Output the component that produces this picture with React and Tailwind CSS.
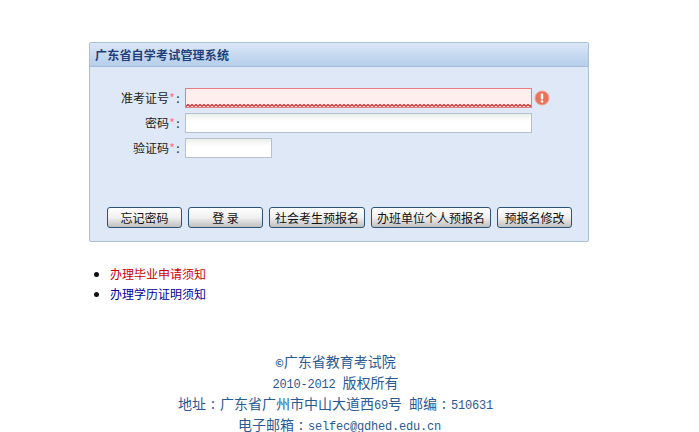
import React from 'react';

const cjk = { fontFamily: '"Noto Sans CJK SC", "Liberation Sans", sans-serif' };

function Field({ label, wide, error }) {
  return (
    <div className="flex items-center h-[20px]">
      <label className="w-[95px] pr-[4px] text-right text-[12px] leading-[20px] text-[#1c1c1c]">
        {label}
        <span className="inline-block w-[6px] text-center text-[#ff6f8a]">*</span>
        <span className="inline-block w-[6px] text-center">:</span>
      </label>
      {error ? (
        <>
          <div className="relative w-[347px] h-[20px] bg-[#ffeeee] border border-[#e57f7f] overflow-hidden">
            {/* red wavy edge along the bottom of the invalid field */}
            <svg className="absolute left-0 bottom-0" width="347" height="3">
              <defs>
                <pattern id="wave" width="4" height="3" patternUnits="userSpaceOnUse">
                  <path d="M0 2.5 L2 0.5 L4 2.5" fill="none" stroke="#d22f2f" strokeWidth="1.3" />
                </pattern>
              </defs>
              <rect width="347" height="3" fill="url(#wave)" />
            </svg>
          </div>
          <svg className="ml-[2px]" width="16" height="16" viewBox="0 0 16 16">
            <circle cx="8" cy="8" r="7" fill="#e8735c" stroke="#f0a594" />
            <rect x="6.8" y="3.5" width="2.4" height="6" rx="1" fill="#fff" />
            <circle cx="8" cy="11.5" r="1.3" fill="#fff" />
          </svg>
        </>
      ) : (
        <div className={`${wide ? 'w-[347px]' : 'w-[87px]'} h-[20px] border border-[#b5bfd0] bg-gradient-to-b from-[#e9efe9] to-white to-40%`} />
      )}
    </div>
  );
}

function Btn({ children, w }) {
  return (
    <button className={`${w} h-[21px] rounded-[3px] border border-[#2b5378] bg-gradient-to-b from-white via-[#f0f0f0] to-[#c0c0c0] text-[12px] leading-[18px] text-[#111]`}>
      {children}
    </button>
  );
}

// latin in the footer runs at half the width of a Chinese character
function Mono({ children }) {
  return (
    <span className="text-[12px] leading-none tracking-[-0.2px] whitespace-pre" style={{ fontFamily: '"Liberation Mono", monospace' }}>
      {children}
    </span>
  );
}

function Colon() {
  return <span className="inline-block w-[14px] text-center leading-none">:</span>;
}

export default function App() {
  return (
    <div className="w-[699px] h-[432px] overflow-hidden bg-white pt-[42px]" style={cjk}>
      {/* Login panel */}
      <div className="ml-[89px] w-[500px] h-[200px] rounded-[2px] border border-[#a9bfd8] bg-[#dfe8f6]">
        <div className="h-[24px] pl-[5px] border-b border-[#a4bedf] bg-gradient-to-b from-[#dae7f6] to-[#b6cdea] text-[12px] tracking-[0.2px] leading-[23px] font-bold text-[#1f3f7a]">
          广东省自学考试管理系统
        </div>
        <div className="mt-[21px] flex flex-col gap-[5px]">
          <Field label="准考证号" error />
          <Field label="密码" wide />
          <Field label="验证码" />
        </div>
        <div className="mt-[49px] ml-[17px] flex gap-[6px]">
          <Btn w="w-[75px]">忘记密码</Btn>
          <Btn w="w-[75px]">登 录</Btn>
          <Btn w="w-[96px]">社会考生预报名</Btn>
          <Btn w="w-[120px]">办班单位个人预报名</Btn>
          <Btn w="w-[75px]">预报名修改</Btn>
        </div>
      </div>

      {/* Notices */}
      <ul className="mt-[22px] ml-[110px] list-disc text-[12px] leading-[20px] text-[#111]">
        <li><a className="text-[#cc0000]">办理毕业申请须知</a></li>
        <li><a className="text-[#000099]">办理学历证明须知</a></li>
      </ul>

      {/* Footer */}
      <div className="mt-[47px] w-[671px] text-center text-[14px] leading-[21px] text-[#2a5a94]">
        <p className="h-[21px]"><span className="text-[10px] font-bold leading-none">©</span>广东省教育考试院</p>
        <p className="h-[21px]"><Mono>2010-2012 </Mono>版权所有</p>
        <p className="h-[21px]">地址<Colon />广东省广州市中山大道西<Mono>69</Mono>号<Mono> </Mono>邮编<Colon /><Mono>510631</Mono></p>
        <p className="h-[21px] pl-[8px]">电子邮箱<Colon /><Mono>selfec@gdhed.edu.cn</Mono></p>
      </div>
    </div>
  );
}
